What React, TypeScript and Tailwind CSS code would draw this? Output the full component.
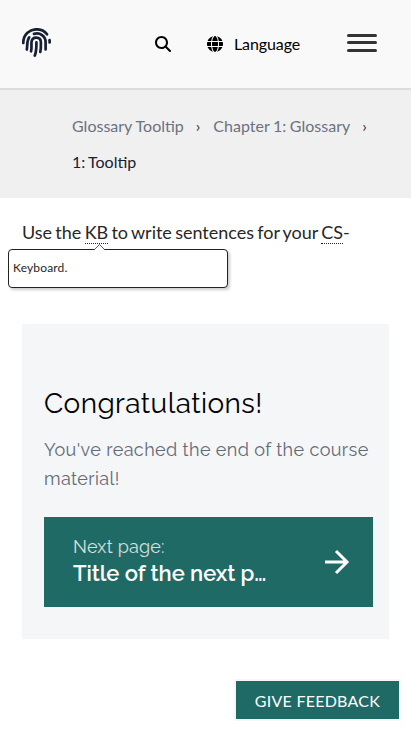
import React from "react";
import { FaGlobe, FaMagnifyingGlass } from "react-icons/fa6";

function Fingerprint() {
  return (
    <svg className="h-[29px] w-[29px]" viewBox="0 0 29 29" fill="none" stroke="#172033" strokeWidth="2.7" strokeLinecap="round">
      <path d="M1.3 15V13.6C1.8 6.5 7.5 1.3 14.5 1.3C18.8 1.3 22.6 3 25 6.3" />
      <path d="M27.6 12.2V14.5" />
      <path d="M4.8 21.5C5.7 18.8 4.3 13.5 7.2 9.4" />
      <path d="M12 5.9C18 4.1 23.6 8.1 23.6 14V21.4" />
      <path d="M9 23.3C10 20.2 9.2 17.5 9.5 14C10.2 8 18.6 8.2 18.9 14.2C19 18 19 21 18.3 24" />
      <path d="M14.4 14.3C14.5 19 14.4 23.5 12.8 27.6" />
    </svg>
  );
}

function Header() {
  return (
    <header className="flex h-[90px] items-start border-b-2 border-[#dcdcdc] bg-[#f9f9f9] pl-[22px] text-black">
      <a href="#" aria-label="Home" className="mt-7 block"><Fingerprint /></a>
      <button aria-label="Search" className="mt-9 ml-[104px]"><FaMagnifyingGlass size={16} /></button>
      <button className="mt-8 ml-9 flex items-center text-[16px] leading-6"><FaGlobe size={16} /><span className="ml-[11px] w-[66px] tracking-[-0.1px]">Language</span></button>
      <button aria-label="Menu" className="mt-[34px] ml-[47px] flex flex-col">
        <span className="h-[3px] w-[30px] rounded-xs bg-[#333]" />
        <span className="mt-1 h-[3px] w-[30px] rounded-xs bg-[#333]" />
        <span className="mt-[5px] h-[3px] w-[30px] rounded-xs bg-[#333]" />
      </button>
    </header>
  );
}

function Breadcrumbs() {
  return (
    <nav className="h-[108px] bg-[#f0f0f0] pt-[18px] pl-[72px] text-[16px] leading-9 text-[#6b7280]">
      <div className="flex whitespace-nowrap">
        <a href="#">Glossary Tooltip</a><span className="mr-[13px] ml-3 text-[#333]">›</span>
        <a href="#" className="[word-spacing:-0.5px]">Chapter 1: Glossary</a><span className="ml-3 text-[#333]">›</span>
      </div>
      <div className="[word-spacing:-0.9px] text-[#172033]">1: Tooltip</div>
    </nav>
  );
}

function Term({ children }: { children: React.ReactNode }) {
  return <span className="inline-block h-[23px] border-b border-dotted border-[#222] leading-[22px]">{children}</span>;
}

export default function App() {
  return (
    <div className="min-h-[731px] overflow-hidden bg-white font-['Lato',sans-serif] text-[#272727]">
      <Header />
      <Breadcrumbs />
      <main className="px-[22px]">
        <div className="relative mt-[21px] h-[105px] text-[18px] leading-[26px] whitespace-nowrap">
          <p className="[word-spacing:-1.35px]">Use the <Term>KB</Term> to write sentences for your <Term>CS</Term>-</p>
          <div className="absolute top-[30px] -left-[14px] h-[39px] w-[220px] rounded border border-[#222] bg-white pl-1 text-[12px] leading-9 tracking-[0.15px] shadow-[2px_2px_3px_rgba(0,0,0,0.2)]">
            Keyboard.
            <svg className="absolute -top-[6px] left-[85px] h-[6px] w-[11px]" viewBox="0 0 11 6"><path d="M0 6L5.5 .5L11 6" fill="white" stroke="#333" strokeWidth=".8" /></svg>
          </div>
        </div>
        <section className="h-[315px] bg-[#f4f6f8] px-[22px] pt-[63px] font-['Raleway','Lato',sans-serif]">
          <h2 className="text-[28px] leading-[34px] tracking-[0.4px] whitespace-nowrap text-black">Congratulations!</h2>
          <p className="mt-[14px] text-[18px] leading-[29px] tracking-[0.4px] whitespace-nowrap text-[#636977]">You've reached the end of the course<br />material!</p>
          <a href="#" className="mt-6 flex h-[90px] w-[329px] items-center justify-between bg-[#206a65] pr-[23px] pl-[29px] text-white">
            <span className="-mt-1 whitespace-nowrap">
              <span className="block text-[18px] leading-[26px] tracking-[0.2px] opacity-80">Next page:</span>
              <span className="block text-[22px] leading-[27px] font-semibold tracking-[-0.05px]">Title of the next p…</span>
            </span>
            <svg className="h-[26px] w-[26px]" viewBox="0 0 26 26" fill="none" stroke="white" strokeWidth="3"><path d="M1 13H23M12 2L23 13L12 24" /></svg>
          </a>
        </section>
      </main>
      <div className="mt-[40px] mr-[10px] flex justify-end">
        <button className="h-[42px] w-[167px] border-2 border-[#f4f6f8] bg-[#206a65] pt-px text-[16px] leading-[38px] tracking-[0.25px] text-white">GIVE FEEDBACK</button>
      </div>
    </div>
  );
}
